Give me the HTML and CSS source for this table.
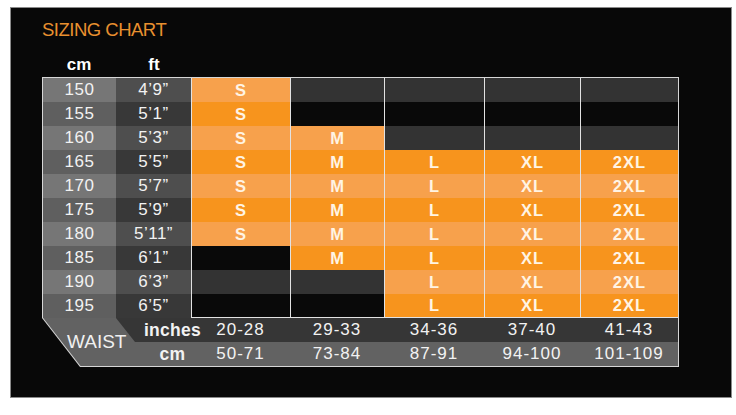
FILE: index.html
```html
<!DOCTYPE html>
<html lang="en">
<head>
<meta charset="utf-8">
<title>Sizing Chart</title>
<link rel="stylesheet" href="styles.css">
</head>
<body>
<div class="frame">
  <h1 class="title">SIZING CHART</h1>
  <div class="heads">
    <span class="head">cm</span>
    <span class="head">ft</span>
  </div>
  <div class="outline">
    <div class="chart">
      <div class="row odd"><div class="cm">150</div><div class="ft">4’9”</div><div class="sz">S</div><div class="no"></div><div class="no"></div><div class="no"></div><div class="no"></div></div>
      <div class="row even"><div class="cm">155</div><div class="ft">5’1”</div><div class="sz">S</div><div class="no"></div><div class="no"></div><div class="no"></div><div class="no"></div></div>
      <div class="row odd"><div class="cm">160</div><div class="ft">5’3”</div><div class="sz">S</div><div class="sz">M</div><div class="no"></div><div class="no"></div><div class="no"></div></div>
      <div class="row even"><div class="cm">165</div><div class="ft">5’5”</div><div class="sz">S</div><div class="sz">M</div><div class="sz">L</div><div class="sz">XL</div><div class="sz">2XL</div></div>
      <div class="row odd"><div class="cm">170</div><div class="ft">5’7”</div><div class="sz">S</div><div class="sz">M</div><div class="sz">L</div><div class="sz">XL</div><div class="sz">2XL</div></div>
      <div class="row even"><div class="cm">175</div><div class="ft">5’9”</div><div class="sz">S</div><div class="sz">M</div><div class="sz">L</div><div class="sz">XL</div><div class="sz">2XL</div></div>
      <div class="row odd"><div class="cm">180</div><div class="ft">5’11”</div><div class="sz">S</div><div class="sz">M</div><div class="sz">L</div><div class="sz">XL</div><div class="sz">2XL</div></div>
      <div class="row even"><div class="cm">185</div><div class="ft">6’1”</div><div class="no"></div><div class="sz">M</div><div class="sz">L</div><div class="sz">XL</div><div class="sz">2XL</div></div>
      <div class="row odd"><div class="cm">190</div><div class="ft">6’3”</div><div class="no"></div><div class="no"></div><div class="sz">L</div><div class="sz">XL</div><div class="sz">2XL</div></div>
      <div class="row even last"><div class="cm">195</div><div class="ft">6’5”</div><div class="no"></div><div class="no"></div><div class="sz">L</div><div class="sz">XL</div><div class="sz">2XL</div></div>
      <div class="waist-row inches"><div class="wlabel">inches</div><div class="wval">20-28</div><div class="wval">29-33</div><div class="wval">34-36</div><div class="wval">37-40</div><div class="wval">41-43</div></div>
      <div class="waist-row cms"><div class="wlabel">cm</div><div class="wval">50-71</div><div class="wval">73-84</div><div class="wval">87-91</div><div class="wval">94-100</div><div class="wval">101-109</div></div>
      <div class="waist">WAIST</div>
    </div>
  </div>
</div>
</body>
</html>
```

FILE: styles.css
```css
html, body {
  margin: 0;
  padding: 0;
  background: #ffffff;
}

body {
  font-family: "Liberation Sans", Arial, sans-serif;
  color: #f2f2f2;
}

.frame {
  box-sizing: border-box;
  margin: 7px 0 0 10px;
  width: 722px;
  height: 391px;
  background: #080808;
  border: 1px solid #8a8a8a;
  padding: 10px 0 0 31px;
}

.title {
  margin: 0;
  height: 24px;
  line-height: 24px;
  font-family: "Liberation Sans", Arial, sans-serif;
  font-weight: normal;
  font-size: 18.5px;
  color: #e9902f;
  letter-spacing: -0.5px;
}

.heads {
  display: grid;
  grid-template-columns: 74px 76px;
  height: 22px;
  margin-top: 13px;
  line-height: 20px;
}

.head {
  text-align: center;
  font-weight: bold;
  font-size: 17px;
  color: #ffffff;
}

.outline {
  width: 637px;
  height: 290px;
  padding: 1px;
  box-sizing: border-box;
  background: #d6d6d6;
  clip-path: polygon(0 0, 100% 0, 100% 100%, 38px 100%, 0 241px);
}

.chart {
  width: 635px;
  height: 288px;
  background: #626262;
  clip-path: polygon(0 0, 100% 0, 100% 100%, 37.5px 100%, 0 239.7px);
  display: grid;
  grid-template-columns: 73px 75px 99px 94px 100px 96px 98px;
  grid-template-rows: repeat(12, 24px);
  font-size: 17px;
  line-height: 24px;
  letter-spacing: 0.5px;
}

.row {
  display: contents;
}

.row > div {
  box-sizing: border-box;
  text-align: center;
}

.odd .cm { background: #767676; }
.even .cm { background: #5f5f5f; }
.odd .ft { background: #4e4e4e; }
.even .ft { background: #383838; }

.sz, .no {
  border-left: 1px solid #e2e2e2;
}

.odd .sz { background: #f7a14c; }
.even .sz { background: #f7941d; }
.odd .no { background: #333333; }
.even .no { background: #090909; }

.sz {
  font-weight: bold;
  font-size: 16.5px;
  letter-spacing: 1px;
  color: #fff4e4;
}

.last .sz, .last .no {
  border-bottom: 1px solid #e2e2e2;
  line-height: 23px;
}

.waist-row {
  grid-column: 2 / 8;
  display: grid;
  grid-template-columns: 75px 99px 94px 100px 96px 98px;
  text-align: center;
  letter-spacing: 1px;
}

.inches {
  grid-row: 11;
  background: #363636;
  clip-path: polygon(0 0, 100% 0, 100% 100%, 19px 100%, 0 0);
}

.cms {
  grid-row: 12;
}

.wlabel {
  display: flex;
  justify-content: center;
  font-weight: bold;
  font-size: 17.5px;
  padding-left: 38px;
  letter-spacing: 0.3px;
}

.waist {
  grid-column: 1 / 3;
  grid-row: 11 / 13;
  align-self: center;
  padding-left: 24px;
  font-size: 19px;
  letter-spacing: 0;
  line-height: 22px;
  color: #f0f0f0;
}
```
